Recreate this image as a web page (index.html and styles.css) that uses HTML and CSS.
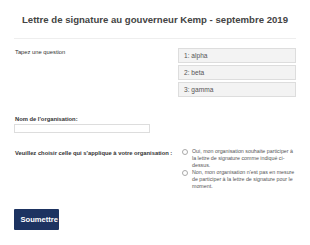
FILE: index.html
```html
<!DOCTYPE html>
<html lang="fr">
<head>
<meta charset="utf-8">
<link rel="stylesheet" href="styles.css">
</head>
<body>
<div class="page">
  <h1 class="title">Lettre de signature au gouverneur Kemp - septembre 2019</h1>
  <div class="rule"></div>
  <div class="row row-question">
    <div class="label light">Tapez une question</div>
    <div class="control">
      <div class="item">1: alpha</div>
      <div class="item">2: beta</div>
      <div class="item">3: gamma</div>
    </div>
  </div>
  <div class="field">
    <div class="label">Nom de l'organisation:</div>
    <div class="input"></div>
  </div>
  <div class="row row-radio">
    <div class="label">Veuillez choisir celle qui s'applique à votre organisation :</div>
    <div class="control">
      <div class="radio"><span class="dot"></span><span class="rtext">Oui, mon organisation souhaite participer à la lettre de signature comme indiqué ci-dessus.</span></div>
      <div class="radio"><span class="dot"></span><span class="rtext">Non, mon organisation n'est pas en mesure de participer à la lettre de signature pour le moment.</span></div>
    </div>
  </div>
  <div class="btn">Soumettre</div>
</div>
</body>
</html>
```
FILE: styles.css
```css
html, body { margin: 0; padding: 0; background: #fff; }
body { font-family: "Liberation Sans", Arial, sans-serif; color: #333; }
.page { padding: 0 14px; width: 282px; }
.title { margin: 0; padding-top: 14px; font-size: 9.6px; line-height: 12px; font-weight: bold; text-align: center; color: #444; }
.rule { margin-top: 12px; border-top: 1px solid #eee; }
.row { display: flex; }
.label { font-size: 5.8px; line-height: 7px; font-weight: bold; color: #333; padding-left: 1px; }
.label.light { font-weight: normal; }
.row-question { margin-top: 9px; }
.row-question .label { width: 163px; padding-top: 1px; }
.row-question .control { flex: 1; display: flex; flex-direction: column; gap: 2px; }
.item { height: 13px; border: 1px solid #ddd; background: #f3f3f3; font-size: 6.6px; line-height: 13px; padding-left: 5px; color: #555; }
.field { margin-top: 19px; }
.input { margin-top: 1px; width: 134px; height: 7px; border: 1px solid #ddd; background: #fff; }
.row-radio { margin-top: 15px; }
.row-radio .label { width: 163px; padding-top: 2px; white-space: nowrap; }
.row-radio .control { flex: 1; display: flex; flex-direction: column; gap: 0; padding-left: 4px; }
.radio { display: flex; gap: 4px; }
.dot { flex: none; width: 4px; height: 4px; border: 1px solid #aaa; border-radius: 50%; margin-top: 1px; }
.rtext { font-size: 5.3px; line-height: 7px; color: #555; }
.btn { margin-top: 19px; width: 45px; height: 21px; background: #1d3361; color: #fff; font-size: 7.6px; font-weight: bold; line-height: 21px; text-align: right; box-sizing: border-box; padding-right: 1px; border-radius: 1px; }
```
